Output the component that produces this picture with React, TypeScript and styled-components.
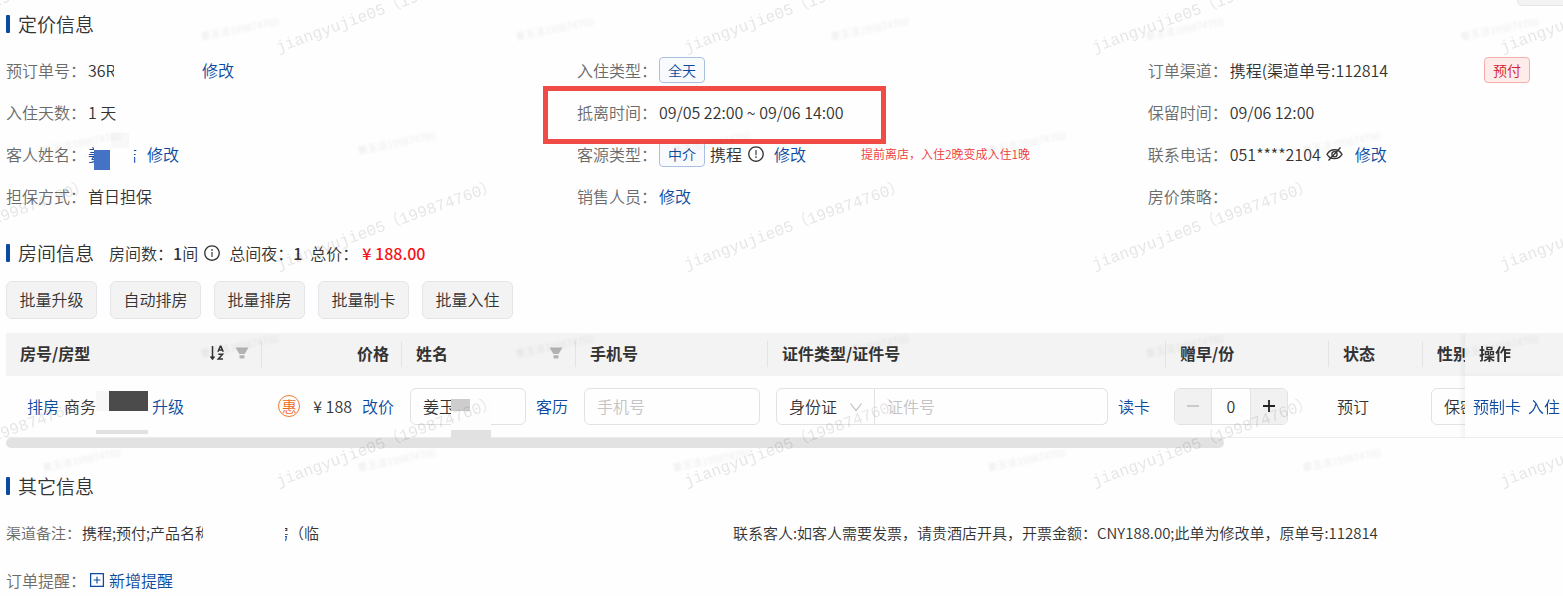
import React from "react";
import styled, { createGlobalStyle, css } from "styled-components";
import {
  AiOutlineExclamationCircle,
  AiOutlineInfoCircle,
  AiOutlinePlusSquare,
} from "react-icons/ai";

const color = {
  primary: "#0b4a9e",
  text: "#333333",
  label: "#6b6b6b",
  border: "#e2e2e2",
  danger: "#f04b45",
  placeholder: "#c4c4c4",
  mask: "#fdfdfd",
};

const GlobalStyle = createGlobalStyle`
  * { box-sizing: border-box; }
  body {
    margin: 0;
    background: #fefefe;
    color: ${color.text};
    font-family: "Noto Sans CJK SC", "Noto Sans", sans-serif;
    font-size: 16px;
    font-weight: 350;
    line-height: 24px;
  }
  button, input, select { font: inherit; color: inherit; }
`;

const Page = styled.main`
  position: relative;
  overflow: hidden;
  padding: 9px 0 0 6px;
`;

const CornerTab = styled.div`
  position: absolute;
  top: -10px;
  right: -8px;
  width: 54px;
  height: 16px;
  border: 1px solid #e6e6e6;
  border-radius: 5px;
  background: #f3f3f3;
`;

const Section = styled.section`
  & + & { margin-top: 21px; }
`;

const Heading = styled.header`
  display: flex;
  align-items: center;
  height: 30px;
  white-space: nowrap;
`;

const Title = styled.h2`
  display: flex;
  align-items: center;
  gap: 8px;
  margin: 0;
  font-size: 19px;
  font-weight: 350;

  &::before {
    content: "";
    width: 4px;
    height: 18px;
    border-radius: 1px;
    background: ${color.primary};
  }
`;

const Totals = styled.div`
  display: flex;
  align-items: center;
  margin-left: 15px;
  gap: 8px;
`;

const Total = styled.span`
  display: flex;
  align-items: center;
  gap: 5px;
`;

const Strong = styled.b`
  font-weight: 500;
`;

const Amount = styled.strong`
  margin-left: 4px;
  color: #f5141a;
  font-weight: 500;
`;

const InfoGrid = styled.div`
  display: grid;
  grid-template-columns: 11fr 11fr 8fr;
  grid-auto-rows: 42px;
  margin-top: 10px;
`;

const Item = styled.div`
  position: relative;
  display: flex;
  align-items: center;
  white-space: nowrap;
`;

const Label = styled.span<{ $compact?: boolean }>`
  flex: none;
  width: ${(p) => (p.$compact ? 76 : 82)}px;
  color: ${color.label};
`;

const linkStyle = css`
  color: ${color.primary};
  text-decoration: none;
`;

const Link = styled.a<{ $gap?: number }>`
  ${linkStyle}
  margin-left: ${(p) => p.$gap ?? 0}px;
`;

const IconLink = styled.a`
  ${linkStyle}
  display: flex;
  align-items: center;
  gap: 3px;

  svg { font-size: 18px; }
`;

const Tag = styled.span<{ $tone?: "red" }>`
  height: 26px;
  padding: 0 8px;
  border: 1px solid ${(p) => (p.$tone ? "#f5aeac" : "#a9c0e2")};
  border-radius: 4px;
  background: ${(p) => (p.$tone ? "#fdecea" : "#f8fafd")};
  color: ${(p) => (p.$tone ? "#d0202c" : color.primary)};
  font-size: 14px;
  ${(p) => p.$tone && "margin: 0 33px 0 auto;"}
`;

const Icon = styled.span<{ $gap?: number }>`
  display: inline-flex;
  margin-left: ${(p) => p.$gap ?? 0}px;
  font-size: 18px;
`;

const Gap = styled.span`
  margin-left: 5px;
`;

const Clip = styled.span<{ $width: number; $end?: boolean }>`
  display: flex;
  flex: none;
  justify-content: ${(p) => (p.$end ? "flex-end" : "flex-start")};
  width: ${(p) => p.$width}px;
  overflow: hidden;
`;

const Redacted = styled.span<{ $width: number }>`
  flex: none;
  width: ${(p) => p.$width}px;
`;

const GuestMask = styled.span`
  position: relative;
  flex: none;
  width: 40px;
  height: 24px;

  &::before, &::after {
    content: "";
    position: absolute;
  }
  &::before {
    left: 0;
    top: 8px;
    width: 16px;
    height: 20px;
    background: #4472c4;
  }
  &::after {
    left: 17px;
    top: -9px;
    width: 18px;
    height: 15px;
    background: #f8f8f8;
  }
`;

const Highlight = styled.div`
  position: absolute;
  z-index: 2;
  left: -34px;
  top: -5px;
  width: 343px;
  height: 58px;
  border: 5px solid ${color.danger};
`;

const Remark = styled.span`
  margin-left: 55px;
  color: #ee3a3a;
  font-size: 12px;
`;

const Toolbar = styled.div`
  display: flex;
  gap: 13px;
  margin-top: 13px;
`;

const ToolButton = styled.button`
  height: 38px;
  min-width: 91px;
  padding: 0 0 2px;
  border: 1px solid #e3e5e8;
  border-radius: 6px;
  background: #f3f3f3;
`;

const TableScroll = styled.div`
  margin-top: 14px;
  overflow: hidden;
`;

const RoomTable = styled.table`
  width: 100%;
  min-width: 1634px;
  border-collapse: separate;
  border-spacing: 0;
  table-layout: fixed;
`;

const fixedCell = css`
  position: sticky;
  right: 0;
  z-index: 1;
  box-shadow: -3px 0 5px rgba(0, 0, 0, 0.05);
`;

const HeadCell = styled.th<{ $align?: "right" | "center"; $fixed?: boolean }>`
  position: relative;
  height: 43px;
  padding: 0 13px 3px 14px;
  background: #f3f3f3;
  font-weight: 700;
  text-align: ${(p) => p.$align ?? "left"};
  white-space: nowrap;

  &:not(:last-child)::after {
    content: "";
    position: absolute;
    right: 0;
    top: 8px;
    width: 1px;
    height: 26px;
    background: #e3e3e3;
  }
  ${(p) => p.$fixed && fixedCell}
`;

const HeadRow = styled.div`
  display: flex;
  align-items: center;
  justify-content: space-between;
`;

const HeadTools = styled.span`
  display: flex;
  align-items: center;
  gap: 9px;
`;

const Cell = styled.td<{ $fixed?: boolean }>`
  height: 62px;
  padding: 0 8px 1px;
  border-bottom: 1px solid #ececec;
  background: #fefefe;
  ${(p) => p.$fixed && fixedCell}
`;

const CellRow = styled.div<{ $pad?: number; $end?: boolean }>`
  display: flex;
  align-items: center;
  justify-content: ${(p) => (p.$end ? "flex-end" : "flex-start")};
  padding-left: ${(p) => p.$pad ?? 0}px;
  white-space: nowrap;
`;

const RoomMask = styled.span`
  position: relative;
  flex: none;
  width: 52px;
  height: 20px;
  margin-right: 4px;
  background: linear-gradient(90deg, #f7f7f7 13px, #4b4b4b 13px);

  &::after {
    content: "";
    position: absolute;
    left: 0;
    top: 39px;
    width: 52px;
    height: 4px;
    background: #e1e1e1;
  }
`;

const RoomMaskWrap = styled.span`
  display: flex;
  height: 30px;
`;

const PromoBadge = styled.span`
  display: inline-flex;
  align-items: center;
  justify-content: center;
  width: 22px;
  height: 22px;
  margin-right: 13px;
  border: 1px solid #ee7a30;
  border-radius: 50%;
  color: #ee6a18;
  font-size: 15px;
`;

const field = css`
  height: 37px;
  padding: 0 12px;
  border: 1px solid ${color.border};
  border-radius: 6px;
  background: #fefefe;
  outline: none;
  &::placeholder { color: ${color.placeholder}; opacity: 1; }
`;

const TextField = styled.input<{ $joined?: boolean }>`
  ${field}
  flex: 1;
  min-width: 0;
  ${(p) => p.$joined && "border-left: 0; border-radius: 0 6px 6px 0;"}
`;

const NameField = styled.div`
  position: relative;
  display: flex;
  width: 116px;
`;

const NameMask = styled.span`
  position: absolute;
  left: 41px;
  top: 11px;
  width: 40px;
  height: 39px;
  border-bottom: 8px solid #e1e1e1;
  background: linear-gradient(#cdcdcd, #cdcdcd) 0 0 / 19px 12px no-repeat ${color.mask};
`;

const SelectWrap = styled.div`
  position: relative;
  display: flex;
  width: 99px;

  svg {
    position: absolute;
    right: 12px;
    top: 13px;
    pointer-events: none;
  }
`;

const Select = styled.select<{ $joined?: boolean }>`
  ${field}
  width: 100%;
  appearance: none;
  ${(p) => p.$joined && "border-radius: 6px 0 0 6px;"}
`;

const Stepper = styled.div`
  display: flex;
  width: 114px;
  height: 37px;
  border: 1px solid ${color.border};
  border-radius: 6px;
  overflow: hidden;
`;

const StepButton = styled.button`
  display: flex;
  align-items: center;
  justify-content: center;
  flex: none;
  width: 36px;
  padding: 0;
  border: 0;
  background: #f1f1f1;
  &:disabled { color: #bbbbbb; }
`;

const StepValue = styled.input`
  flex: 1;
  min-width: 0;
  padding: 0;
  border: 1px solid ${color.border};
  border-width: 0 1px;
  background: #fefefe;
  text-align: center;
  outline: none;
`;

const ScrollThumb = styled.div`
  width: 78.2%;
  height: 10px;
  margin-bottom: 23px;
  border-radius: 5px;
  background: #e2e2e2;
`;

const Notes = styled.div`
  display: flex;
  flex-direction: column;
  gap: 17px;
  margin-top: 17px;

  ${Item} { height: 30px; }
`;

const NoteItem = styled(Item)`
  font-size: 15px;
`;

const markGrid = css`
  position: absolute;
  z-index: 3;
  display: grid;
  justify-items: start;
  pointer-events: none;
  user-select: none;
  white-space: nowrap;

  span { transform-origin: left bottom; }
`;

const AccountMarks = styled.div`
  ${markGrid}
  left: -127px;
  top: -157px;
  grid-template-columns: repeat(5, 408px);
  grid-auto-rows: 217px;
  align-items: end;
  color: rgba(0, 0, 0, 0.1);
  font-family: "Liberation Mono", "Noto Sans CJK SC", monospace;
  font-size: 16px;

  span { transform: rotate(-20deg); }
`;

const NameMarks = styled.div<{ $left: number; $top: number }>`
  ${markGrid}
  left: ${(p) => p.$left}px;
  top: ${(p) => p.$top}px;
  grid-template-columns: repeat(6, 315px);
  grid-auto-rows: 317px;
  align-items: start;
  color: rgba(0, 0, 0, 0.09);
  font-size: 10px;
  filter: blur(1px);

  span { transform: rotate(-11deg); }
`;

const SortIcon = () => (
  <svg width="17" height="16" viewBox="0 0 17 16" fill="none" stroke="#333" strokeWidth="1.5" aria-hidden="true">
    <path d="M3.500 1v12.500M1.500 11.500l2 2.500 2-2.500" />
    <path d="M9 6.800 11.300 1.200h.6L14.200 6.800M9.900 5h3.500M9.300 9.300h4.300L9.300 14h4.700" />
  </svg>
);

const FilterIcon = () => (
  <svg width="14" height="14" viewBox="0 0 14 14" fill="#b3b3b3" aria-hidden="true">
    <path d="M.5 1.500h13L9.700 8H4.300ZM4.500 9.200h5v2.600a.7.7 0 0 1-.7.7H5.200a.7.7 0 0 1-.7-.7Z" />
  </svg>
);

const ChevronIcon = () => (
  <svg width="14" height="12" viewBox="0 0 14 12" fill="none" stroke="#bdbdbd" strokeWidth="1.2" aria-hidden="true">
    <path d="M1.500 2.500 7 9.500l5.500-7" />
  </svg>
);

const MinusIcon = () => (
  <svg width="14" height="14" viewBox="0 0 14 14" stroke="#bdbdbd" strokeWidth="1.4" aria-hidden="true">
    <path d="M1 7h12" />
  </svg>
);

const PlusIcon = () => (
  <svg width="14" height="14" viewBox="0 0 14 14" stroke="#222" strokeWidth="1.8" aria-hidden="true">
    <path d="M1 7h12M7 1v12" />
  </svg>
);

const EyeOffIcon = () => (
  <svg width="17" height="16" viewBox="0 0 17 16" fill="none" stroke="#333" strokeWidth="1.300" aria-hidden="true">
    <path d="M1 8.300C4.500 2.200 12.500 2.200 16 8.300 12.500 14 4.500 14 1 8.300Z" />
    <circle cx="8.500" cy="8.200" r="2.600" />
    <path d="M14.500 1.500 2.500 14.500" />
  </svg>
);

const actions = ["批量升级", "自动排房", "批量排房", "批量制卡", "批量入住"];
const columns = [256, 140, 174, 192, 398, 163, 94, 119, 98];

const marks = (count: number, text: string) =>
  Array.from({ length: count }, (_, i) => <span key={i}>{text}</span>);

export default function App() {
  return (
    <>
      <GlobalStyle />
      <Page>
        <CornerTab />
        <Section>
          <Heading><Title>定价信息</Title></Heading>
          <InfoGrid>
            <Item>
              <Label>预订单号：</Label>
              <Clip $width={26}>36R</Clip>
              <Redacted $width={88} />
              <Link href="#order">修改</Link>
            </Item>
            <Item>
              <Label>入住类型：</Label>
              <Tag>全天</Tag>
            </Item>
            <Item>
              <Label>订单渠道：</Label>
              <span>携程(渠道单号:112814</span>
              <Tag $tone="red">预付</Tag>
            </Item>

            <Item>
              <Label>入住天数：</Label>
              <span>1 天</span>
            </Item>
            <Item>
              <Highlight />
              <Label>抵离时间：</Label>
              <span>09/05 22:00 ~ 09/06 14:00</span>
            </Item>
            <Item>
              <Label>保留时间：</Label>
              <span>09/06 12:00</span>
            </Item>

            <Item>
              <Label>客人姓名：</Label>
              <Link href="#guest"><Clip $width={6}>姜</Clip></Link>
              <GuestMask />
              <Link href="#guest"><Clip $width={3} $end>洁</Clip></Link>
              <Link href="#guest-edit" $gap={10}>修改</Link>
            </Item>
            <Item>
              <Label>客源类型：</Label>
              <Tag>中介</Tag>
              <Gap>携程</Gap>
              <Icon $gap={5}><AiOutlineExclamationCircle /></Icon>
              <Link href="#source" $gap={9}>修改</Link>
              <Remark>提前离店，入住2晚变成入住1晚</Remark>
            </Item>
            <Item>
              <Label>联系电话：</Label>
              <span>051****2104</span>
              <Icon $gap={5}><EyeOffIcon /></Icon>
              <Link href="#phone" $gap={12}>修改</Link>
            </Item>

            <Item>
              <Label>担保方式：</Label>
              <span>首日担保</span>
            </Item>
            <Item>
              <Label>销售人员：</Label>
              <Link href="#sales">修改</Link>
            </Item>
            <Item>
              <Label>房价策略：</Label>
            </Item>
          </InfoGrid>
        </Section>

        <Section>
          <Heading>
            <Title>房间信息</Title>
            <Totals>
              <Total>
                <span>房间数：<Strong>1</Strong>间</span>
                <Icon><AiOutlineInfoCircle /></Icon>
              </Total>
              <span>总间夜：<Strong>1</Strong></span>
              <span>总价：<Amount>¥ 188.00</Amount></span>
            </Totals>
          </Heading>
          <Toolbar>
            {actions.map((name) => <ToolButton key={name} type="button">{name}</ToolButton>)}
          </Toolbar>
          <TableScroll>
            <RoomTable>
              <colgroup>
                {columns.map((w, i) => <col key={i} width={w} />)}
              </colgroup>
              <thead>
                <tr>
                  <HeadCell>
                    <HeadRow>
                      房号/房型
                      <HeadTools><SortIcon /><FilterIcon /></HeadTools>
                    </HeadRow>
                  </HeadCell>
                  <HeadCell $align="right">价格</HeadCell>
                  <HeadCell><HeadRow>姓名<FilterIcon /></HeadRow></HeadCell>
                  <HeadCell>手机号</HeadCell>
                  <HeadCell>证件类型/证件号</HeadCell>
                  <HeadCell>赠早/份</HeadCell>
                  <HeadCell>状态</HeadCell>
                  <HeadCell>性别</HeadCell>
                  <HeadCell $fixed>操作</HeadCell>
                </tr>
              </thead>
              <tbody>
                <tr>
                  <Cell>
                    <CellRow $pad={13}>
                      <Link href="#assign">排房</Link>
                      <Gap>商务</Gap>
                      <RoomMaskWrap><RoomMask /></RoomMaskWrap>
                      <Link href="#upgrade">升级</Link>
                    </CellRow>
                  </Cell>
                  <Cell>
                    <CellRow $end>
                      <PromoBadge>惠</PromoBadge>
                      <span>¥ 188</span>
                      <Link href="#price" $gap={10}>改价</Link>
                    </CellRow>
                  </Cell>
                  <Cell>
                    <CellRow>
                      <NameField>
                        <TextField aria-label="姓名" defaultValue="姜玉" />
                        <NameMask />
                      </NameField>
                      <Link href="#history" $gap={10}>客历</Link>
                    </CellRow>
                  </Cell>
                  <Cell>
                    <CellRow><TextField aria-label="手机号" placeholder="手机号" /></CellRow>
                  </Cell>
                  <Cell>
                    <CellRow>
                      <SelectWrap>
                        <Select $joined aria-label="证件类型"><option>身份证</option></Select>
                        <ChevronIcon />
                      </SelectWrap>
                      <TextField $joined aria-label="证件号" placeholder="证件号" />
                      <Link href="#card" $gap={10}>读卡</Link>
                      <Redacted $width={8} />
                    </CellRow>
                  </Cell>
                  <Cell>
                    <Stepper>
                      <StepButton type="button" aria-label="减少" disabled><MinusIcon /></StepButton>
                      <StepValue aria-label="赠早份数" defaultValue="0" />
                      <StepButton type="button" aria-label="增加"><PlusIcon /></StepButton>
                    </Stepper>
                  </Cell>
                  <Cell>预订</Cell>
                  <Cell>
                    <Select aria-label="性别"><option>保密</option></Select>
                  </Cell>
                  <Cell $fixed>
                    <CellRow>
                      <Link href="#make-card">预制卡</Link>
                      <Link href="#check-in" $gap={7}>入住</Link>
                    </CellRow>
                  </Cell>
                </tr>
              </tbody>
            </RoomTable>
          </TableScroll>
          <ScrollThumb />
        </Section>

        <Section>
          <Heading><Title>其它信息</Title></Heading>
          <Notes>
            <NoteItem>
              <Label $compact>渠道备注：</Label>
              <Clip $width={121}>携程;预付;产品名称</Clip>
              <Redacted $width={82} />
              <Clip $width={4} $end>房</Clip>
              <span>（临</span>
              <Redacted $width={414} />
              <span>联系客人:如客人需要发票，请贵酒店开具，开票金额：CNY188.00;此单为修改单，原单号:112814</span>
            </NoteItem>
            <Item>
              <Label>订单提醒：</Label>
              <IconLink href="#reminder"><AiOutlinePlusSquare />新增提醒</IconLink>
            </Item>
          </Notes>
        </Section>

        <AccountMarks aria-hidden="true">{marks(15, "jiangyujie05（199874760）")}</AccountMarks>
        <NameMarks $left={-112} $top={24} aria-hidden="true">{marks(12, "姜玉洁199874760")}</NameMarks>
        <NameMarks $left={45} $top={138} aria-hidden="true">{marks(12, "姜玉洁199874760")}</NameMarks>
      </Page>
    </>
  );
}
